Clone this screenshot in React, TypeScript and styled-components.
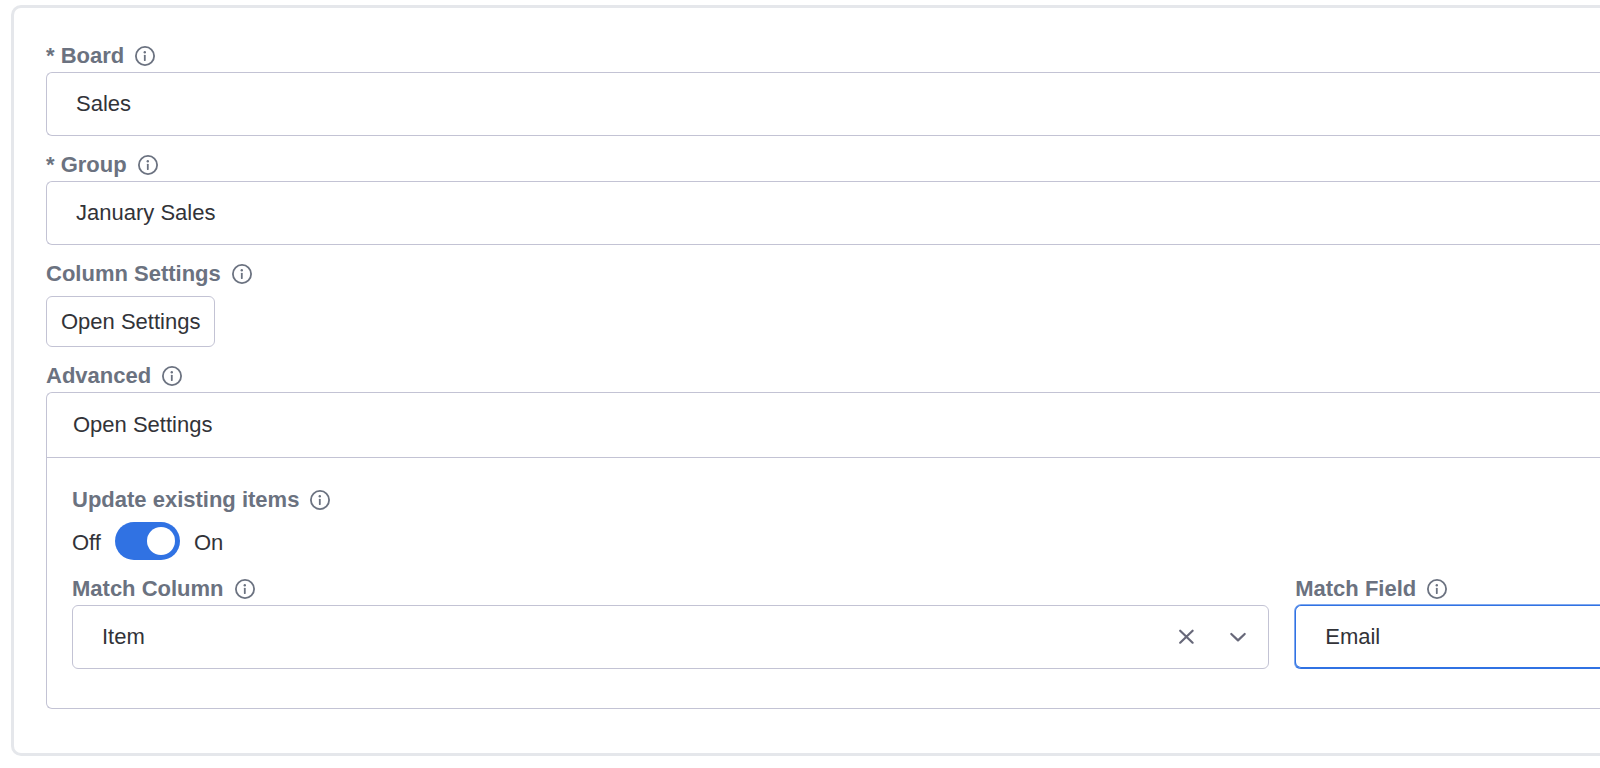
import React, { useState } from "react";
import styled, { createGlobalStyle } from "styled-components";

const color = {
  label: "#6b7280",
  text: "#323338",
  line: "#c3c3d4",
  frame: "#e5e7eb",
  accent: "#3072e3",
  accentSoft: "#7fa8ef",
  icon: "#676879",
};

const GlobalStyle = createGlobalStyle`
  *, *::before, *::after { box-sizing: border-box; }
  body {
    margin: 0;
    background: #fff;
    color: ${color.text};
    font-family: Helvetica, "Liberation Sans", Arial, sans-serif;
    font-size: 22px;
  }
  button, select, input { font: inherit; color: inherit; margin: 0; }
`;

const Page = styled.main`
  padding: 5px 0 12px 11px;
`;

/* The card runs off the right edge of the page, so its right side stays open. */
const Card = styled.form`
  display: flex;
  flex-direction: column;
  gap: 13px;
  padding: 32px 0 44px 32px;
  border: 3px solid ${color.frame};
  border-right: 0;
  border-radius: 10px 0 0 10px;
`;

const Field = styled.div`
  min-width: 0;
`;

const LabelRow = styled.div`
  display: flex;
  align-items: center;
  gap: 11px;
  height: 32px;
  color: ${color.label};
`;

const LabelText = styled.label`
  font-weight: 700;
  line-height: 32px;
  white-space: nowrap;
`;

const IconButton = styled.button`
  display: flex;
  padding: 0;
  border: 0;
  background: none;
  cursor: pointer;
`;

const SelectWrap = styled.div`
  position: relative;
`;

const Select = styled.select<{ $open?: boolean; $active?: boolean }>`
  display: block;
  width: 100%;
  height: 64px;
  padding: 0 29px 2px;
  appearance: none;
  outline: none;
  background: #fff;
  border: 1px solid ${(p) => (p.$active ? color.accent : color.line)};
  border-right-width: ${(p) => (p.$open ? "0" : "1px")};
  border-radius: ${(p) => (p.$open ? "6px 0 0 6px" : "6px")};
  box-shadow: ${(p) =>
    p.$active
      ? `inset 0 -1px 0 ${color.accent}, 0 -1px 0 ${color.accentSoft}, -1px 0 0 ${color.accentSoft}`
      : "none"};
`;

const SelectTools = styled.div`
  position: absolute;
  inset: 0 22px 0 auto;
  display: flex;
  align-items: center;
  gap: 35px;
  color: ${color.icon};
  pointer-events: none;

  button { pointer-events: auto; }
`;

const OutlineButton = styled.button`
  display: block;
  height: 51px;
  margin-top: 6px;
  padding: 0 14px;
  background: #fff;
  border: 1px solid ${color.line};
  border-radius: 6px;
  cursor: pointer;
`;

const Panel = styled.section`
  border: 1px solid ${color.line};
  border-right: 0;
  border-radius: 6px 0 0 6px;
`;

const PanelHeader = styled.button`
  display: block;
  width: 100%;
  height: 65px;
  padding: 0 26px;
  border: 0;
  border-bottom: 1px solid ${color.line};
  border-radius: 6px 0 0 0;
  background: none;
  text-align: left;
  cursor: pointer;
`;

const PanelBody = styled.div`
  display: flex;
  flex-direction: column;
  gap: 13px;
  padding: 26px 0 39px 25px;
`;

const Columns = styled.div`
  display: grid;
  grid-template-columns: minmax(0, 55fr) minmax(0, 14fr);
  gap: 26px;
`;

const SwitchRow = styled.div`
  display: flex;
  gap: 14px;
  margin-top: 6px;
`;

const SwitchText = styled.span`
  padding-top: 4px;
  line-height: 34px;
`;

const Switch = styled.input`
  display: flex;
  align-items: center;
  width: 65px;
  height: 38px;
  padding: 0 5px;
  appearance: none;
  border-radius: 19px;
  background: ${color.line};
  cursor: pointer;

  &::before {
    content: "";
    width: 28px;
    height: 28px;
    border-radius: 50%;
    background: #fff;
  }
  &:checked {
    justify-content: flex-end;
    background: ${color.accent};
  }
`;

function InfoIcon() {
  return (
    <svg width="20" height="20" viewBox="0 0 20 20" fill="none" aria-hidden="true">
      <circle cx="10" cy="10" r="9.1" stroke="currentColor" strokeWidth="1.8" />
      <circle cx="9.8" cy="6.2" r="1.2" fill="currentColor" />
      <path d="M9.8 9.6V14.2" stroke="currentColor" strokeWidth="1.8" strokeLinecap="round" />
    </svg>
  );
}

function CloseIcon() {
  return (
    <svg width="16" height="16" viewBox="0 0 16 16" fill="none" aria-hidden="true">
      <path d="M2.2 1.7L14.6 13.7M14.6 1.7L2.2 13.7" stroke="currentColor" strokeWidth="2.2" strokeLinecap="round" />
    </svg>
  );
}

function ChevronIcon() {
  return (
    <svg width="18" height="18" viewBox="0 0 18 18" fill="none" aria-hidden="true">
      <path d="M2.3 6L9 12.4L15.7 6" stroke="currentColor" strokeWidth="2.2" strokeLinecap="round" strokeLinejoin="round" />
    </svg>
  );
}

function FieldLabel({ htmlFor, name, required }: { htmlFor: string; name: string; required?: boolean }) {
  return (
    <LabelRow>
      <LabelText htmlFor={htmlFor}>{required ? `* ${name}` : name}</LabelText>
      <IconButton type="button" aria-label={`About ${name}`}>
        <InfoIcon />
      </IconButton>
    </LabelRow>
  );
}

export default function App() {
  const [update, setUpdate] = useState(true);
  const [column, setColumn] = useState("Item");

  return (
    <>
      <GlobalStyle />
      <Page>
        <Card>
          <Field>
            <FieldLabel htmlFor="board" name="Board" required />
            <Select id="board" $open>
              <option>Sales</option>
            </Select>
          </Field>
          <Field>
            <FieldLabel htmlFor="group" name="Group" required />
            <Select id="group" $open>
              <option>January Sales</option>
            </Select>
          </Field>
          <Field>
            <FieldLabel htmlFor="column-settings" name="Column Settings" />
            <OutlineButton id="column-settings" type="button">Open Settings</OutlineButton>
          </Field>
          <Field>
            <FieldLabel htmlFor="advanced" name="Advanced" />
            <Panel>
              <PanelHeader id="advanced" type="button" aria-expanded="true">Open Settings</PanelHeader>
              <PanelBody>
                <Field>
                  <FieldLabel htmlFor="update-items" name="Update existing items" />
                  <SwitchRow>
                    <SwitchText>Off</SwitchText>
                    <Switch
                      id="update-items"
                      type="checkbox"
                      role="switch"
                      checked={update}
                      onChange={(e) => setUpdate(e.target.checked)}
                    />
                    <SwitchText>On</SwitchText>
                  </SwitchRow>
                </Field>
                <Columns>
                  <Field>
                    <FieldLabel htmlFor="match-column" name="Match Column" />
                    <SelectWrap>
                      <Select id="match-column" value={column} onChange={(e) => setColumn(e.target.value)}>
                        <option value="" />
                        <option value="Item">Item</option>
                      </Select>
                      <SelectTools>
                        <IconButton type="button" aria-label="Clear match column" onClick={() => setColumn("")}>
                          <CloseIcon />
                        </IconButton>
                        <ChevronIcon />
                      </SelectTools>
                    </SelectWrap>
                  </Field>
                  <Field>
                    <FieldLabel htmlFor="match-field" name="Match Field" />
                    <Select id="match-field" $open $active>
                      <option>Email</option>
                    </Select>
                  </Field>
                </Columns>
              </PanelBody>
            </Panel>
          </Field>
        </Card>
      </Page>
    </>
  );
}
